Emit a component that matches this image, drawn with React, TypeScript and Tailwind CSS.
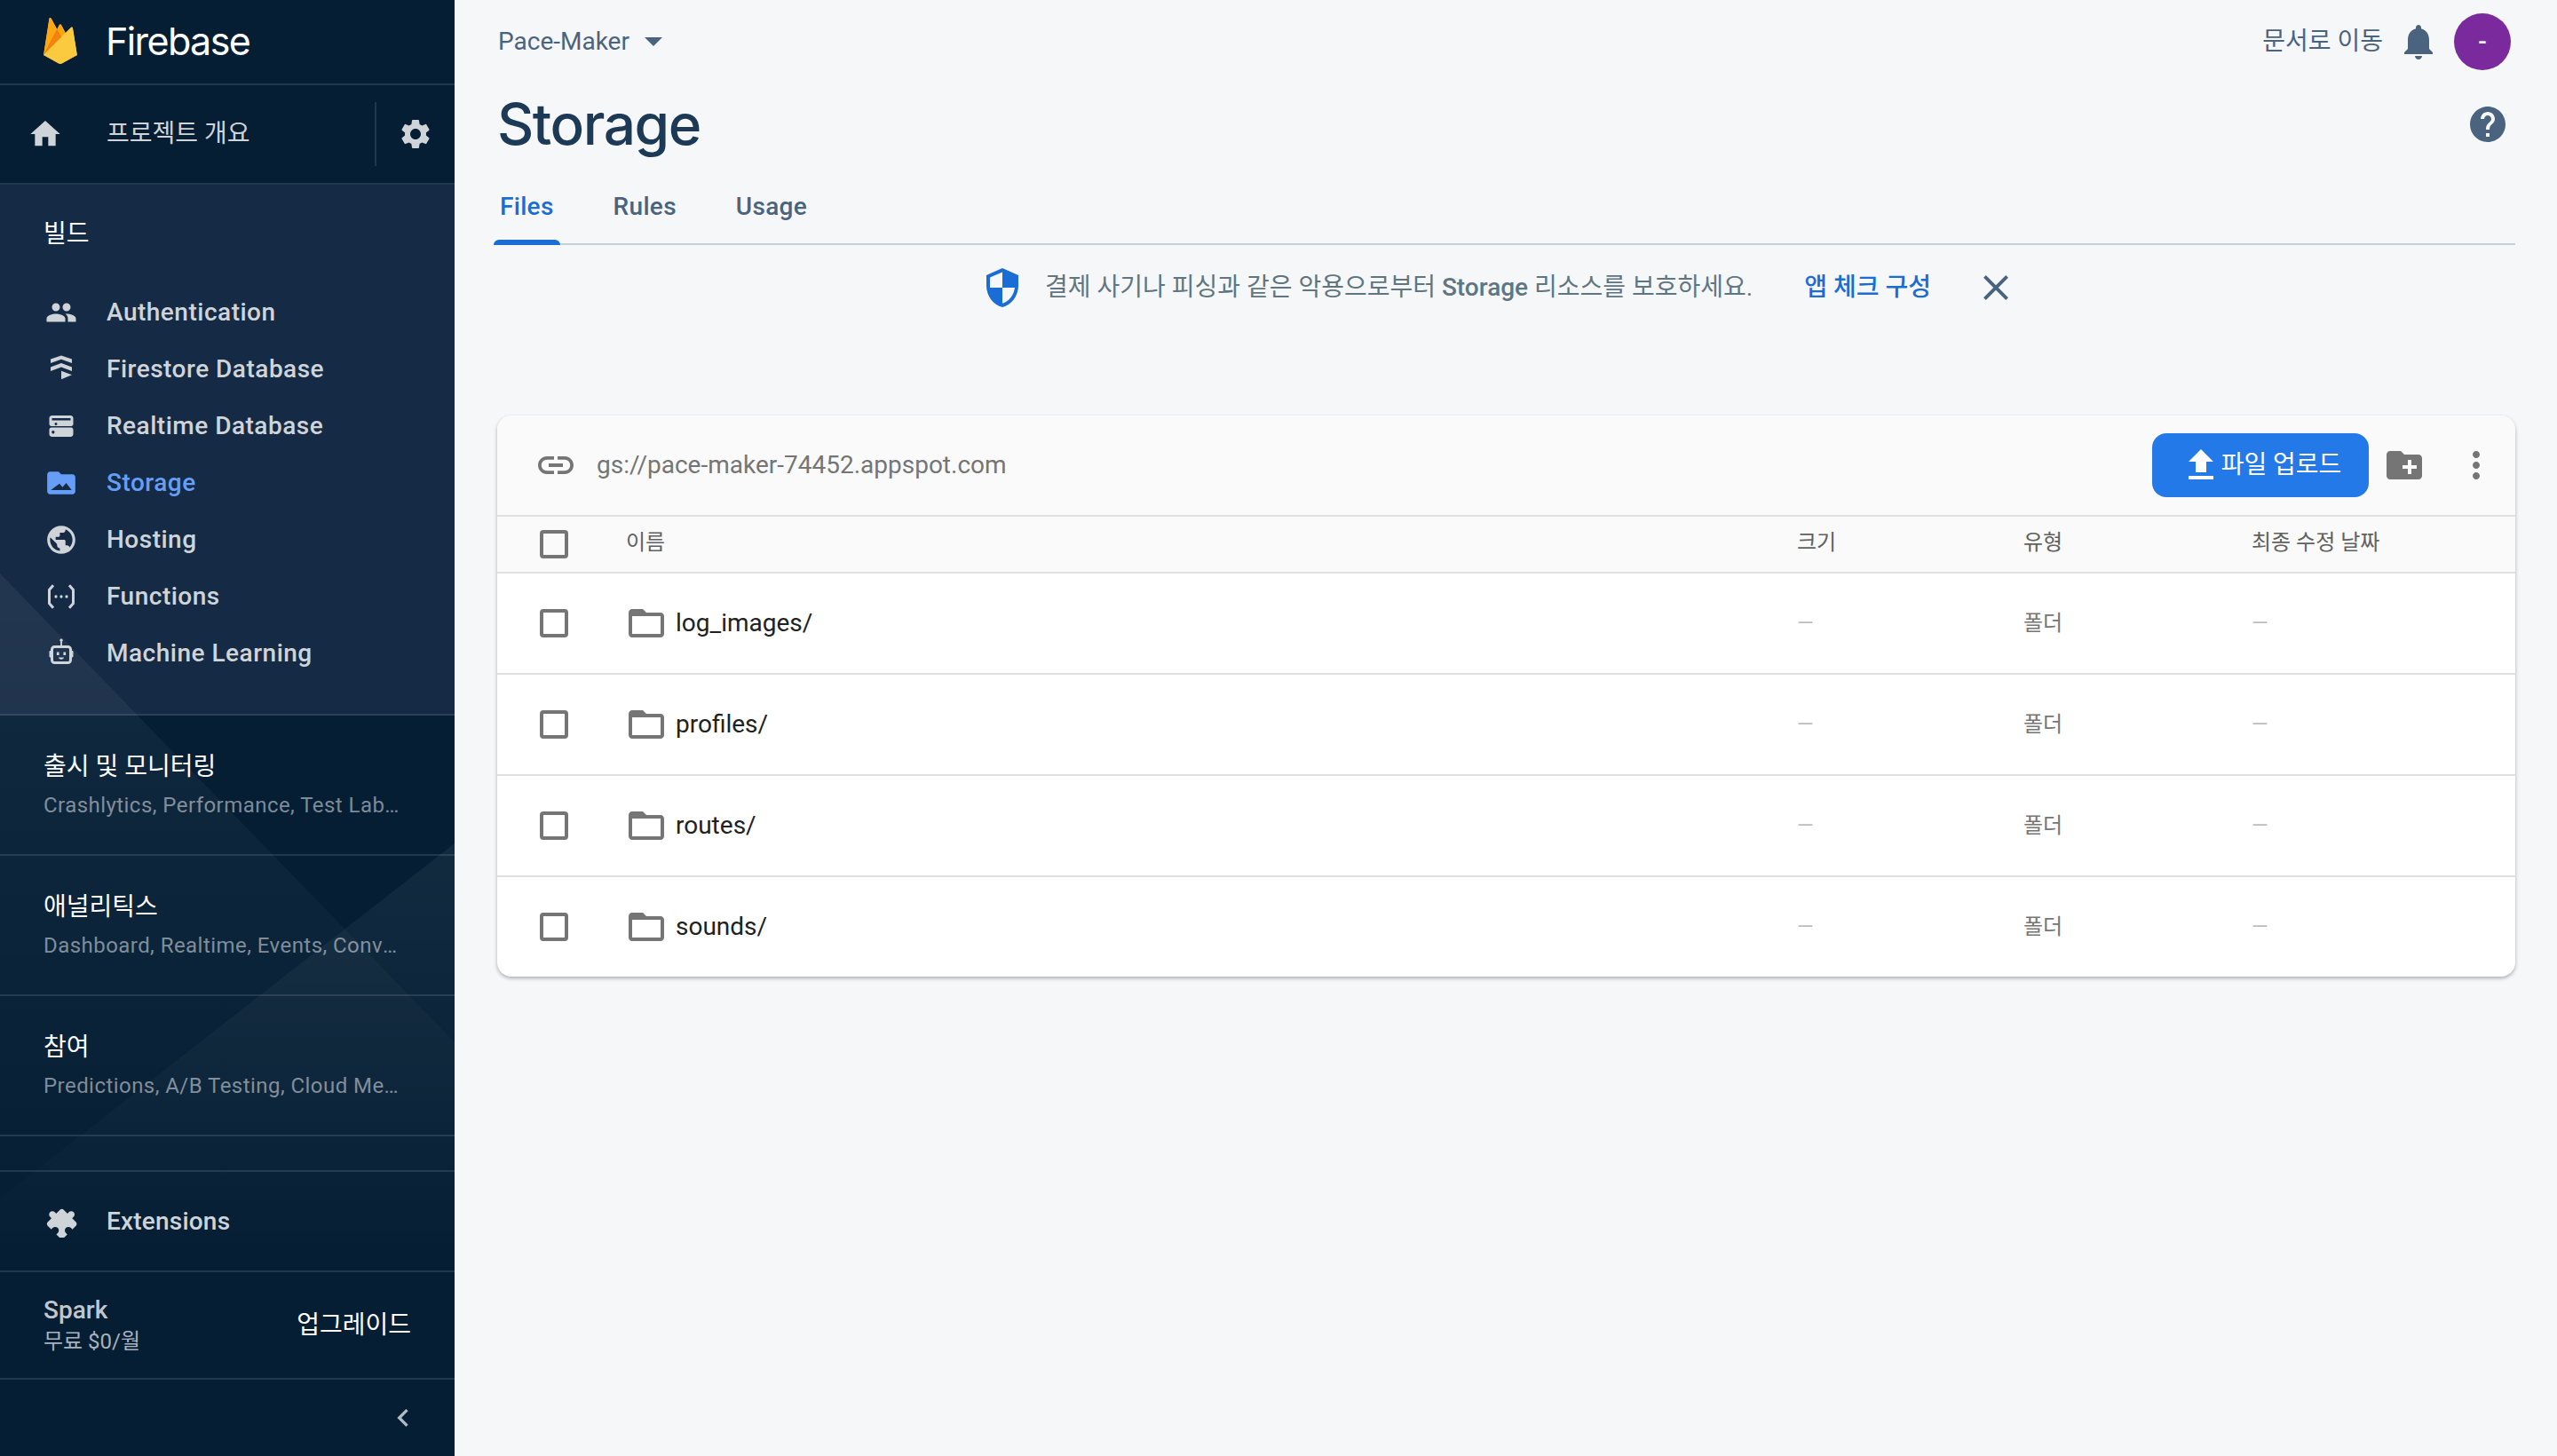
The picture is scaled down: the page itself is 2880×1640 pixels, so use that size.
const sans = "font-['Roboto','Noto_Sans_CJK_KR',sans-serif]"

function Icon({ d, className }: { d: string; className?: string }) {
  return (
    <svg viewBox="0 0 24 24" fill="currentColor" className={className}>
      <path d={d} />
    </svg>
  )
}

const paths = {
  home: 'M10 20v-6h4v6h5v-8h3L12 3 2 12h3v8z',
  people:
    'M16 11c1.66 0 2.99-1.34 2.99-3S17.66 5 16 5c-1.66 0-3 1.34-3 3s1.34 3 3 3zm-8 0c1.66 0 2.99-1.34 2.99-3S9.66 5 8 5C6.34 5 5 6.34 5 8s1.34 3 3 3zm0 2c-2.33 0-7 1.17-7 3.5V19h14v-2.5c0-2.33-4.67-3.5-7-3.5zm8 0c-.29 0-.62.02-.97.05 1.16.84 1.97 1.97 1.97 3.45V19h6v-2.5c0-2.33-4.67-3.5-7-3.5z',
  gear: 'M19.14 12.94c.04-.3.06-.61.06-.94 0-.32-.02-.64-.07-.94l2.03-1.58c.18-.14.23-.41.12-.61l-1.92-3.32c-.12-.22-.37-.29-.59-.22l-2.39.96c-.5-.38-1.03-.7-1.62-.94l-.36-2.54c-.04-.24-.24-.41-.48-.41h-3.84c-.24 0-.43.17-.47.41l-.36 2.54c-.59.24-1.13.57-1.62.94l-2.39-.96c-.22-.08-.47 0-.59.22L2.74 8.87c-.12.21-.08.47.12.61l2.03 1.58c-.05.3-.09.63-.09.94s.02.64.07.94l-2.03 1.58c-.18.14-.23.41-.12.61l1.92 3.32c.12.22.37.29.59.22l2.39-.96c.5.38 1.03.7 1.62.94l.36 2.54c.05.24.24.41.48.41h3.84c.24 0 .44-.17.47-.41l.36-2.54c.59-.24 1.13-.56 1.62-.94l2.39.96c.22.08.47 0 .59-.22l1.92-3.32c.12-.22.07-.47-.12-.61l-2.01-1.58zM12 15.6c-1.98 0-3.6-1.62-3.6-3.6s1.62-3.6 3.6-3.6 3.6 1.62 3.6 3.6-1.62 3.6-3.6 3.6z',
  globe:
    'M12 2C6.48 2 2 6.48 2 12s4.48 10 10 10 10-4.48 10-10S17.52 2 12 2zm-1 17.93c-3.95-.49-7-3.85-7-7.93 0-.62.08-1.21.21-1.79L9 15v1c0 1.1.9 2 2 2v1.93zm6.9-2.54c-.26-.81-1-1.39-1.9-1.39h-1v-3c0-.55-.45-1-1-1H8v-2h2c.55 0 1-.45 1-1V7h2c1.1 0 2-.9 2-2v-.41c2.93 1.19 5 4.06 5 7.41 0 2.08-.8 3.97-2.1 5.39z',
  chevron: 'M15.41 7.41 14 6l-6 6 6 6 1.41-1.41L10.83 12z',
  link: 'M3.9 12c0-1.71 1.39-3.1 3.1-3.1h4V7H7c-2.76 0-5 2.24-5 5s2.24 5 5 5h4v-1.9H7c-1.71 0-3.1-1.39-3.1-3.1zM8 13h8v-2H8v2zm9-6h-4v1.9h4c1.71 0 3.1 1.39 3.1 3.1s-1.39 3.1-3.1 3.1h-4V17h4c2.76 0 5-2.24 5-5s-2.24-5-5-5z',
  bell: 'M12 22c1.1 0 2-.9 2-2h-4c0 1.1.89 2 2 2zm6-6v-5c0-3.07-1.64-5.64-4.5-6.32V4c0-.83-.67-1.5-1.5-1.5s-1.5.67-1.5 1.5v.68C7.63 5.36 6 7.92 6 11v5l-2 2v1h16v-1l-2-2z',
  help: 'M12 2C6.48 2 2 6.48 2 12s4.48 10 10 10 10-4.48 10-10S17.52 2 12 2zm1 17h-2v-2h2v2zm2.07-7.75l-.9.92C13.45 12.9 13 13.5 13 15h-2v-.5c0-1.1.45-2.1 1.17-2.83l1.24-1.26c.37-.36.59-.86.59-1.41 0-1.1-.9-2-2-2s-2 .9-2 2H8c0-2.21 1.79-4 4-4s4 1.79 4 4c0 .88-.36 1.68-.93 2.25z',
  close:
    'M19 6.41 17.59 5 12 10.59 6.41 5 5 6.41 10.59 12 5 17.59 6.41 19 12 13.41 17.59 19 19 17.59 13.41 12z',
  upload: 'M9 16h6v-6h4l-7-7-7 7h4v6zm-4 2h14v2H5v-2z',
  newFolder:
    'M20 6h-8l-2-2H4c-1.11 0-1.99.89-1.99 2L2 18c0 1.11.89 2 2 2h16c1.11 0 2-.89 2-2V8c0-1.11-.89-2-2-2zm-1 8h-3v3h-2v-3h-3v-2h3V9h2v3h3v2z',
  more: 'M12 8c1.1 0 2-.9 2-2s-.9-2-2-2-2 .9-2 2 .9 2 2 2zm0 2c-1.1 0-2 .9-2 2s.9 2 2 2 2-.9 2-2-.9-2-2-2zm0 6c-1.1 0-2 .9-2 2s.9 2 2 2 2-.9 2-2-.9-2-2-2z',
  folder:
    'M20 6h-8l-2-2H4c-1.1 0-1.99.9-1.99 2L2 18c0 1.1.9 2 2 2h16c1.1 0 2-.9 2-2V8c0-1.1-.9-2-2-2zm0 12H4V8h16v10z',
  shield:
    'M12 1 3 5v6c0 5.55 3.84 10.74 9 12 5.16-1.26 9-6.45 9-12V5l-9-4zm0 10.99h7c-.53 4.12-3.28 7.79-7 8.94V12H5V6.3l7-3.11v8.8z',
  storage:
    'M2 6.2C2 5 2.9 4 4 4h6l2 1.8h8c1.1 0 2 .9 2 2V18c0 1.1-.9 2-2 2H4c-1.1 0-2-.9-2-2V6.2zM4.6 17h14.8l-3.9-5-2.6 3-2.2-2.6L4.6 17z',
  realtime:
    'M5 4h14c1.1 0 2 .9 2 2v4.5c0 .8-.7 1.5-1.5 1.5h-15C3.7 12 3 11.3 3 10.5V6c0-1.1.9-2 2-2zm0 2v1.7h14V6H5zm2 4.3a1 1 0 1 0 0-.01zM4.5 13h15c.8 0 1.5.7 1.5 1.5V18c0 1.1-.9 2-2 2H5c-1.1 0-2-.9-2-2v-3.5c0-.8.7-1.5 1.5-1.5zM7 16.5a1.1 1.1 0 1 0 0 .01z',
  firestore:
    'M12 1.6 20 4.4v2.9L12 4.5 4 7.3V4.4zM12 7.3l8 3v3l-8-3-8 3v-3zM12 13.2l8 3-8 3.3V21.6z',
}

function FirebaseLogo() {
  return (
    <svg viewBox="0 0 256 351" className="h-[52px] w-[38px]">
      <path fill="#FFC24A" d="M0 282.998l2.123-2.972L102.527 89.512l.212-2.017L58.48 4.358C54.77-2.606 44.33-.845 43.114 6.951L0 282.998z" />
      <path fill="#FFA712" d="M1.253 280.732l1.605-3.131 99.353-188.518-44.15-83.475C54.392-1.3 45.074.45 43.87 8.188L1.253 280.732z" />
      <path fill="#F4BD62" d="M135.005 150.38l32.955-33.75-32.965-62.93c-3.129-5.957-11.866-5.975-14.962 0L102.42 87.287v2.86l32.584 60.233z" />
      <path fill="#FFA50E" d="M134.417 148.974l32.039-32.812-32.039-61.007c-3.042-5.791-10.433-6.398-13.443-.59l-17.705 34.109-.53 1.744 31.678 58.556z" />
      <path fill="#F6820C" d="M0 282.998l.962-.968 3.496-1.42 128.477-128 1.628-4.431-32.05-61.074L0 282.998z" />
      <path fill="#FDE068" d="M139.121 347.551l116.275-64.847-33.204-204.495c-1.039-6.398-8.888-8.927-13.468-4.34L0 282.998l115.608 64.548a24.126 24.126 0 0 0 23.513.005" />
      <path fill="#FCCA3F" d="M254.354 282.16L221.402 79.218c-1.03-6.35-7.558-8.977-12.103-4.424L1.29 282.6l114.339 63.908a23.943 23.943 0 0 0 23.334.006l115.392-64.355z" />
      <path fill="#EEAB37" d="M139.12 345.64a24.126 24.126 0 0 1-23.512-.005L.931 282.015l-.93.983 115.607 64.548a24.126 24.126 0 0 0 23.513.005l116.275-64.847-.285-1.752-115.99 64.689z" />
    </svg>
  )
}

function FunctionsIcon() {
  return (
    <svg viewBox="0 0 24 24" fill="none" stroke="currentColor" className="h-9 w-9">
      <path d="M6 3.5 3.2 6.6c-.1 0-.2.2-.2.4v10c0 .2.1.4.2.4L6 20.5" strokeWidth="2" />
      <path d="M18 3.5l2.8 3.1c.1 0 .2.2.2.4v10c0 .2-.1.4-.2.4L18 20.5" strokeWidth="2" />
      <circle cx="8" cy="12" r="1.1" fill="currentColor" stroke="none" />
      <circle cx="12" cy="12" r="1.1" fill="currentColor" stroke="none" />
      <circle cx="16" cy="12" r="1.1" fill="currentColor" stroke="none" />
    </svg>
  )
}

function RobotIcon() {
  return (
    <svg viewBox="0 0 24 24" fill="currentColor" className="h-9 w-9">
      <path d="M12 1a1.2 1.2 0 0 1 .6 2.2V6H17a3 3 0 0 1 3 3v1h.2c.5 0 .8.4.8.8v3.4c0 .4-.3.8-.8.8H20v2a3 3 0 0 1-3 3H7a3 3 0 0 1-3-3v-2h-.2a.8.8 0 0 1-.8-.8v-3.4c0-.4.3-.8.8-.8H4V9a3 3 0 0 1 3-3h4.4V3.2A1.2 1.2 0 0 1 12 1zM7 8a1 1 0 0 0-1 1v8a1 1 0 0 0 1 1h10a1 1 0 0 0 1-1V9a1 1 0 0 0-1-1H7zm1.6 3h1.8v2.4H8.6V11zm5 0h1.8v2.4h-1.8V11zM10 15h4c0 .8-.8 1.5-2 1.5s-2-.7-2-1.5z" />
    </svg>
  )
}

function ExtensionIcon() {
  return (
    <svg viewBox="0 0 24 24" fill="currentColor" className="h-9 w-9">
      <path
        transform="rotate(-45 12 12) translate(0.6 0)"
        d="M20.5 11H19V7c0-1.1-.9-2-2-2h-4V3.5C13 2.12 11.88 1 10.5 1S8 2.12 8 3.5V5H4c-1.1 0-1.99.9-1.99 2v3.8H3.5c1.49 0 2.7 1.21 2.7 2.7s-1.21 2.7-2.7 2.7H2V20c0 1.1.9 2 2 2h3.8v-1.5c0-1.49 1.21-2.7 2.7-2.7 1.49 0 2.7 1.21 2.7 2.7V22H17c1.1 0 2-.9 2-2v-4h1.5c1.38 0 2.5-1.12 2.5-2.5S21.88 11 20.5 11z"
      />
    </svg>
  )
}

function NavItem({ icon, label, active }: { icon: React.ReactNode; label: string; active?: boolean }) {
  return (
    <div
      className={[
        'flex h-16 items-center gap-[32px] pl-[50px] text-[28px] font-medium tracking-[0.5px]',
        active ? 'text-[#669df6]' : 'text-[#cfd4d9]',
      ].join(' ')}
    >
      <span className="flex w-[38px] justify-center">{icon}</span>
      {label}
    </div>
  )
}

function Category({ title, sub }: { title: string; sub: string }) {
  return (
    <div className="flex h-[158px] flex-col border-b-2 border-[#21374e] pl-[49px] pr-[60px] pt-[39px]">
      <div className="text-[28px] leading-[38px] text-white">{title}</div>
      <div className="mt-[6px] truncate text-[24px] leading-[36px] tracking-[0.45px] text-[#7d8a97]">{sub}</div>
    </div>
  )
}

function Sidebar() {
  return (
    <aside className="relative flex h-[1640px] w-[512px] shrink-0 flex-col bg-[#051e34]">
      <div className="flex h-[96px] items-center gap-[32px] border-b-2 border-[#21374e] pl-[49px] pb-[2px]">
        <FirebaseLogo />
        <span className="font-['Inter',sans-serif] text-[43px] tracking-[-1.6px] text-white">Firebase</span>
      </div>
      <div className="flex h-[112px] items-center border-b-2 border-[#21374e] text-[#cfd4d9]">
        <span className="flex w-[120px] justify-center pl-[16px] pr-[34px]">
          <Icon d={paths.home} className="h-10 w-10 shrink-0" />
        </span>
        <span className="text-[28px] text-[#cfd4d9]">프로젝트 개요</span>
        <span className="ml-auto h-[72px] w-[2px] bg-[#21374e]" />
        <span className="flex w-[88px] justify-center">
          <Icon d={paths.gear} className="h-10 w-10" />
        </span>
      </div>
      <div className="h-[598px] border-b-2 border-[#2a4057] bg-[#152b45]">
        <div className="flex h-[112px] items-center pl-[49px] text-[28px] text-white">빌드</div>
        <NavItem icon={<Icon d={paths.people} className="h-9 w-9" />} label="Authentication" />
        <NavItem icon={<Icon d={paths.firestore} className="h-9 w-9" />} label="Firestore Database" />
        <NavItem icon={<Icon d={paths.realtime} className="h-9 w-9" />} label="Realtime Database" />
        <NavItem active icon={<Icon d={paths.storage} className="h-10 w-10" />} label="Storage" />
        <NavItem icon={<Icon d={paths.globe} className="h-10 w-10" />} label="Hosting" />
        <NavItem icon={<FunctionsIcon />} label="Functions" />
        <NavItem icon={<RobotIcon />} label="Machine Learning" />
      </div>
      <Category title="출시 및 모니터링" sub="Crashlytics, Performance, Test Lab …" />
      <Category title="애널리틱스" sub="Dashboard, Realtime, Events, Conversions, Audiences" />
      <Category title="참여" sub="Predictions, A/B Testing, Cloud Messaging, In-App" />
      <div className="h-[40px] border-b-2 border-[#21374e]" />
      <div className="flex h-[113px] items-center gap-[32px] border-b-2 border-[#21374e] pl-[50px] text-[28px] font-medium tracking-[0.2px] text-[#cfd4d9]">
        <span className="flex w-[38px] justify-center">
          <ExtensionIcon />
        </span>
        Extensions
      </div>
      <div className="flex h-[121px] items-center justify-between border-b-2 border-[#21374e] pl-[49px] pr-[49px]">
        <div>
          <div className="text-[28px] font-medium leading-[36px] text-[#bfc6cd]">Spark</div>
          <div className="text-[24px] leading-[34px] text-[#a9b1ba]">무료 $0/월</div>
        </div>
        <div className="text-[28px] text-white">업그레이드</div>
      </div>
      <div className="flex flex-1 items-center justify-end pr-[38px] text-[#b4bac1]">
        <Icon d={paths.chevron} className="h-10 w-10" />
      </div>
      <svg viewBox="0 0 512 1640" className="pointer-events-none absolute inset-0 h-full w-full">
        <defs>
          <linearGradient id="fadeA" x1="0" y1="646" x2="0" y2="1420" gradientUnits="userSpaceOnUse">
            <stop offset="0" stopColor="#fff" stopOpacity="0.055" />
            <stop offset="1" stopColor="#fff" stopOpacity="0" />
          </linearGradient>
          <linearGradient id="fadeB" x1="0" y1="950" x2="0" y2="1420" gradientUnits="userSpaceOnUse">
            <stop offset="0" stopColor="#fff" stopOpacity="0.055" />
            <stop offset="1" stopColor="#fff" stopOpacity="0" />
          </linearGradient>
        </defs>
        <polygon points="0,646 512,1174 512,1420 0,1420" fill="url(#fadeA)" />
        <polygon points="512,950 0,1350 0,1420 512,1420" fill="url(#fadeB)" />
      </svg>
    </aside>
  )
}

function Checkbox() {
  return <span className="block h-8 w-8 rounded-[4px] border-[4px] border-[#757575]" />
}

const rows = ['log_images/', 'profiles/', 'routes/', 'sounds/']

function FileTable() {
  return (
    <section className="mt-[96px] overflow-hidden rounded-2xl bg-white shadow-[0_2px_4px_rgba(0,0,0,0.3)]">
      <div className="flex h-[114px] items-center border-b-2 border-[#e0e0e0] bg-[#fafafa] pl-[42px] pr-[20px]">
        <Icon d={paths.link} className="h-12 w-12 text-[#757575]" />
        <span className="ml-[22px] text-[28px] text-[#757575]">gs://pace-maker-74452.appspot.com</span>
        <button className="ml-auto flex h-[72px] w-[244px] items-center justify-center gap-[1px] rounded-2xl bg-[#2479e8] text-[28px] text-white">
          <Icon d={paths.upload} className="h-12 w-12 shrink-0" />
          <span className="-ml-[2px]">파일 업로드</span>
        </button>
        <Icon d={paths.newFolder} className="ml-[16px] h-12 w-12 text-[#757575]" />
        <Icon d={paths.more} className="ml-[33px] h-12 w-12 text-[#757575]" />
      </div>
      <div className="grid h-[64px] grid-cols-[144px_1320px_255px_257px_1fr] items-center border-b-2 border-[#e0e0e0] bg-[#fafafa] text-[24px] text-[#616161]">
        <span className="pl-[48px]">
          <Checkbox />
        </span>
        <span className="pl-[1px] pb-[4px]">이름</span>
        <span className="pb-[4px]">크기</span>
        <span className="pb-[4px]">유형</span>
        <span className="pb-[4px]">최종 수정 날짜</span>
      </div>
      {rows.map((name, i) => (
        <div
          key={name}
          className={[
            'grid grid-cols-[144px_1320px_255px_257px_1fr] items-center text-[24px] text-[#757575]',
            i < rows.length - 1 ? 'h-[114px] border-b-2 border-[#e0e0e0]' : 'h-[112px]',
          ].join(' ')}
        >
          <span className="pl-[48px]">
            <Checkbox />
          </span>
          <span className="flex items-center text-[28px] text-[#212121]">
            <Icon d={paths.folder} className="h-12 w-12 shrink-0 text-[#757575]" />
            <span className="ml-[9px]">{name}</span>
          </span>
          <span className="text-[#bdbdbd]">—</span>
          <span>폴더</span>
          <span className="text-[#bdbdbd]">—</span>
        </div>
      ))}
    </section>
  )
}

export default function App() {
  return (
    <div className={`flex h-[1640px] w-[2880px] overflow-hidden bg-[#f6f7f9] ${sans}`}>
      <Sidebar />
      <main className="flex-1 pl-[48px] pr-[47px]">
        <div className="flex h-[94px] items-center">
          <span className="ml-[1px] text-[28px] text-[#4a6480]">Pace-Maker</span>
          <svg viewBox="0 0 20 10" className="ml-[17px] h-[10px] w-[20px] fill-[#4a6480]">
            <path d="M0 0h20L10 10z" />
          </svg>
          <span className="ml-auto text-[28px] text-[#4a6480]">문서로 이동</span>
          <Icon d={paths.bell} className="ml-[16px] h-12 w-12 text-[#4a6480]" />
          <span className="ml-[16px] mr-[5px] flex h-16 w-16 items-center justify-center rounded-full bg-[#7b2a9e] text-[28px] font-medium text-white">
            -
          </span>
        </div>
        <div className="flex h-[92px] items-center justify-between">
          <h1 className="font-['Inter',sans-serif] text-[64px] font-medium tracking-[-1.5px] text-[#1c3a56]">Storage</h1>
          <Icon d={paths.help} className="mr-[7px] h-12 w-12 text-[#4a6480]" />
        </div>
        <div className="relative -ml-[4px] flex h-[90px] items-end gap-[53px] border-b-2 border-[#c5d0dc]">
          <div className="relative -mb-[2px] flex h-[64px] flex-col justify-start px-[7px] text-[28px] font-medium tracking-[0.3px] text-[#1a6dd4]">
            Files
            <span className="absolute inset-x-0 bottom-0 h-[6px] rounded-t-md bg-[#1a6dd4]" />
          </div>
          <div className="-mb-[2px] flex h-[64px] px-[7px] text-[28px] font-medium tracking-[0.3px] text-[#4a6480]">Rules</div>
          <div className="-mb-[2px] flex h-[64px] px-[7px] text-[28px] font-medium tracking-[0.3px] text-[#4a6480]">Usage</div>
        </div>
        <div className="flex h-[96px] items-center justify-center pr-[16px]">
          <Icon d={paths.shield} className="h-12 w-12 text-[#1a6dd4]" />
          <span className="ml-[24px] text-[28px] text-[#5f7682]">
            결제 사기나 피싱과 같은 악용으로부터 <span className="font-medium">Storage</span> 리소스를 보호하세요.
          </span>
          <span className="ml-[58px] text-[28px] font-medium text-[#1a6dd4]">앱 체크 구성</span>
          <Icon d={paths.close} className="ml-[49px] h-12 w-12 text-[#4a6480]" />
        </div>
        <FileTable />
      </main>
    </div>
  )
}
